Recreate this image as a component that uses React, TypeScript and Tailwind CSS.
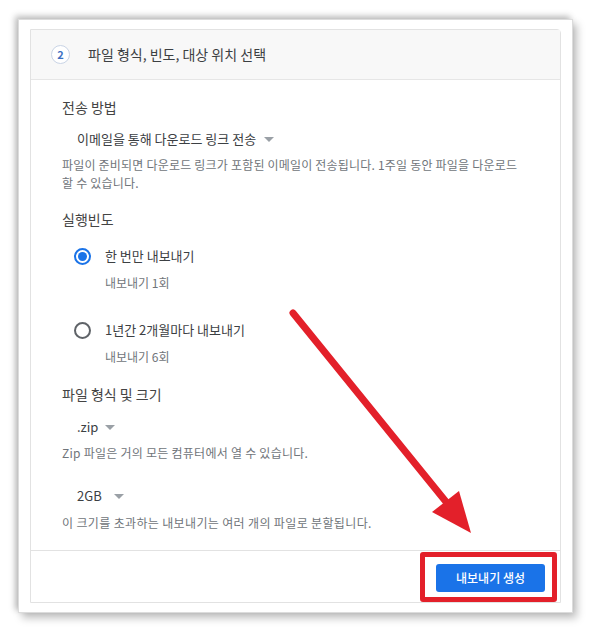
import React from 'react';

const font = { fontFamily: '"Noto Sans CJK KR", "Noto Sans", sans-serif' };

function Dropdown({ label, gap }: { label: string; gap: string }) {
  return (
    <div className="flex items-center h-5 ml-[15px] text-[13px] text-[#3c4043]">
      <span>{label}</span>
      <span className={`${gap} w-0 h-0 border-l-[5px] border-r-[5px] border-t-[5px] border-l-transparent border-r-transparent border-t-[#9aa0a6]`} />
    </div>
  );
}

function Radio({ checked, label, sub, mt }: { checked: boolean; label: string; sub: string; mt: string }) {
  return (
    <div className={mt}>
      <div className="flex items-center h-5">
        <span
          className={`ml-[12px] w-[17px] h-[17px] rounded-full border-2 flex items-center justify-center ${
            checked ? 'border-[#1a73e8]' : 'border-[#5f6368]'
          }`}
        >
          {checked && <span className="w-[9px] h-[9px] rounded-full bg-[#1a73e8]" />}
        </span>
        <span className="ml-[14px] text-[13px] text-[#3c4043]">{label}</span>
      </div>
      <div className="mt-2 ml-[43px] h-[18px] leading-[18px] text-[12px] text-[#70757a]">{sub}</div>
    </div>
  );
}

export default function App() {
  return (
    <div className="relative w-[592px] h-[633px] bg-white overflow-hidden" style={font}>
      <div className="absolute left-[18px] top-[19px] w-[555px] h-[594px] bg-white border border-[#dcdcdc] shadow-[-3px_-3px_6px_rgba(0,0,0,0.25),4px_5px_8px_rgba(0,0,0,0.25)]" />
      <div className="relative ml-[30px] pt-[29px] w-[531px]">
        <div className="h-[574px] border border-[#e2e2e2] rounded-tr-[4px] bg-white flex flex-col">
          <div className="h-[50px] bg-[#f8f8f8] border-b border-[#e6e6e6] flex items-center pl-[20px]">
            <span className="w-[19px] h-[19px] rounded-full border border-[#c9d4e6] bg-white flex items-center justify-center text-[11px] font-bold text-[#3d6fc2]">
              2
            </span>
            <span className="ml-[18px] text-[14px] text-[#3c4043]">파일 형식, 빈도, 대상 위치 선택</span>
          </div>

          <div className="flex-1 pl-[31px] pt-[17px] leading-5">
            <div className="h-5 text-[14px] text-[#444]">전송 방법</div>
            <div className="mt-3">
              <Dropdown label="이메일을 통해 다운로드 링크 전송" gap="ml-[8px]" />
            </div>
            <div className="mt-[7px] text-[12px] leading-[18px] text-[#70757a] tracking-[0.2px] w-[475px]">
              파일이 준비되면 다운로드 링크가 포함된 이메일이 전송됩니다. 1주일 동안 파일을 다운로드
              <br />
              할 수 있습니다.
            </div>

            <div className="mt-[17px] h-5 text-[14px] text-[#444]">실행빈도</div>
            <Radio checked label="한 번만 내보내기" sub="내보내기 1회" mt="mt-[17px]" />
            <Radio checked={false} label="1년간 2개월마다 내보내기" sub="내보내기 6회" mt="mt-[28px]" />

            <div className="mt-[18px] h-5 text-[14px] text-[#444]">파일 형식 및 크기</div>
            <div className="mt-[13px]">
              <Dropdown label=".zip" gap="ml-[7px]" />
            </div>
            <div className="mt-[7px] h-[18px] leading-[18px] text-[12px] text-[#70757a] tracking-[0.25px]">
              Zip 파일은 거의 모든 컴퓨터에서 열 수 있습니다.
            </div>
            <div className="mt-[24px]">
              <Dropdown label="2GB" gap="ml-[12px]" />
            </div>
            <div className="mt-2 h-[18px] leading-[18px] text-[12px] text-[#70757a] tracking-[0.35px]">
              이 크기를 초과하는 내보내기는 여러 개의 파일로 분할됩니다.
            </div>
          </div>

          <div className="h-[52px] border-t border-[#e2e2e2] flex justify-end items-start pt-[13px] pr-[15px]">
            <button className="w-[109px] h-[28px] rounded-[3px] bg-[#1a73e8] text-white text-[12px] font-medium">
              내보내기 생성
            </button>
          </div>
        </div>
      </div>

      <div className="absolute left-[420px] top-[552px] w-[137px] h-[50px] border-[5px] border-[#e3202a] rounded-[3px]" />

      <svg className="absolute left-0 top-0" width="592" height="633" viewBox="0 0 592 633">
        <line x1="293" y1="313" x2="447" y2="503" stroke="#e3202a" strokeWidth="7" strokeLinecap="round" />
        <polygon points="471,533 432,512 459,491" fill="#e3202a" />
      </svg>
    </div>
  );
}
